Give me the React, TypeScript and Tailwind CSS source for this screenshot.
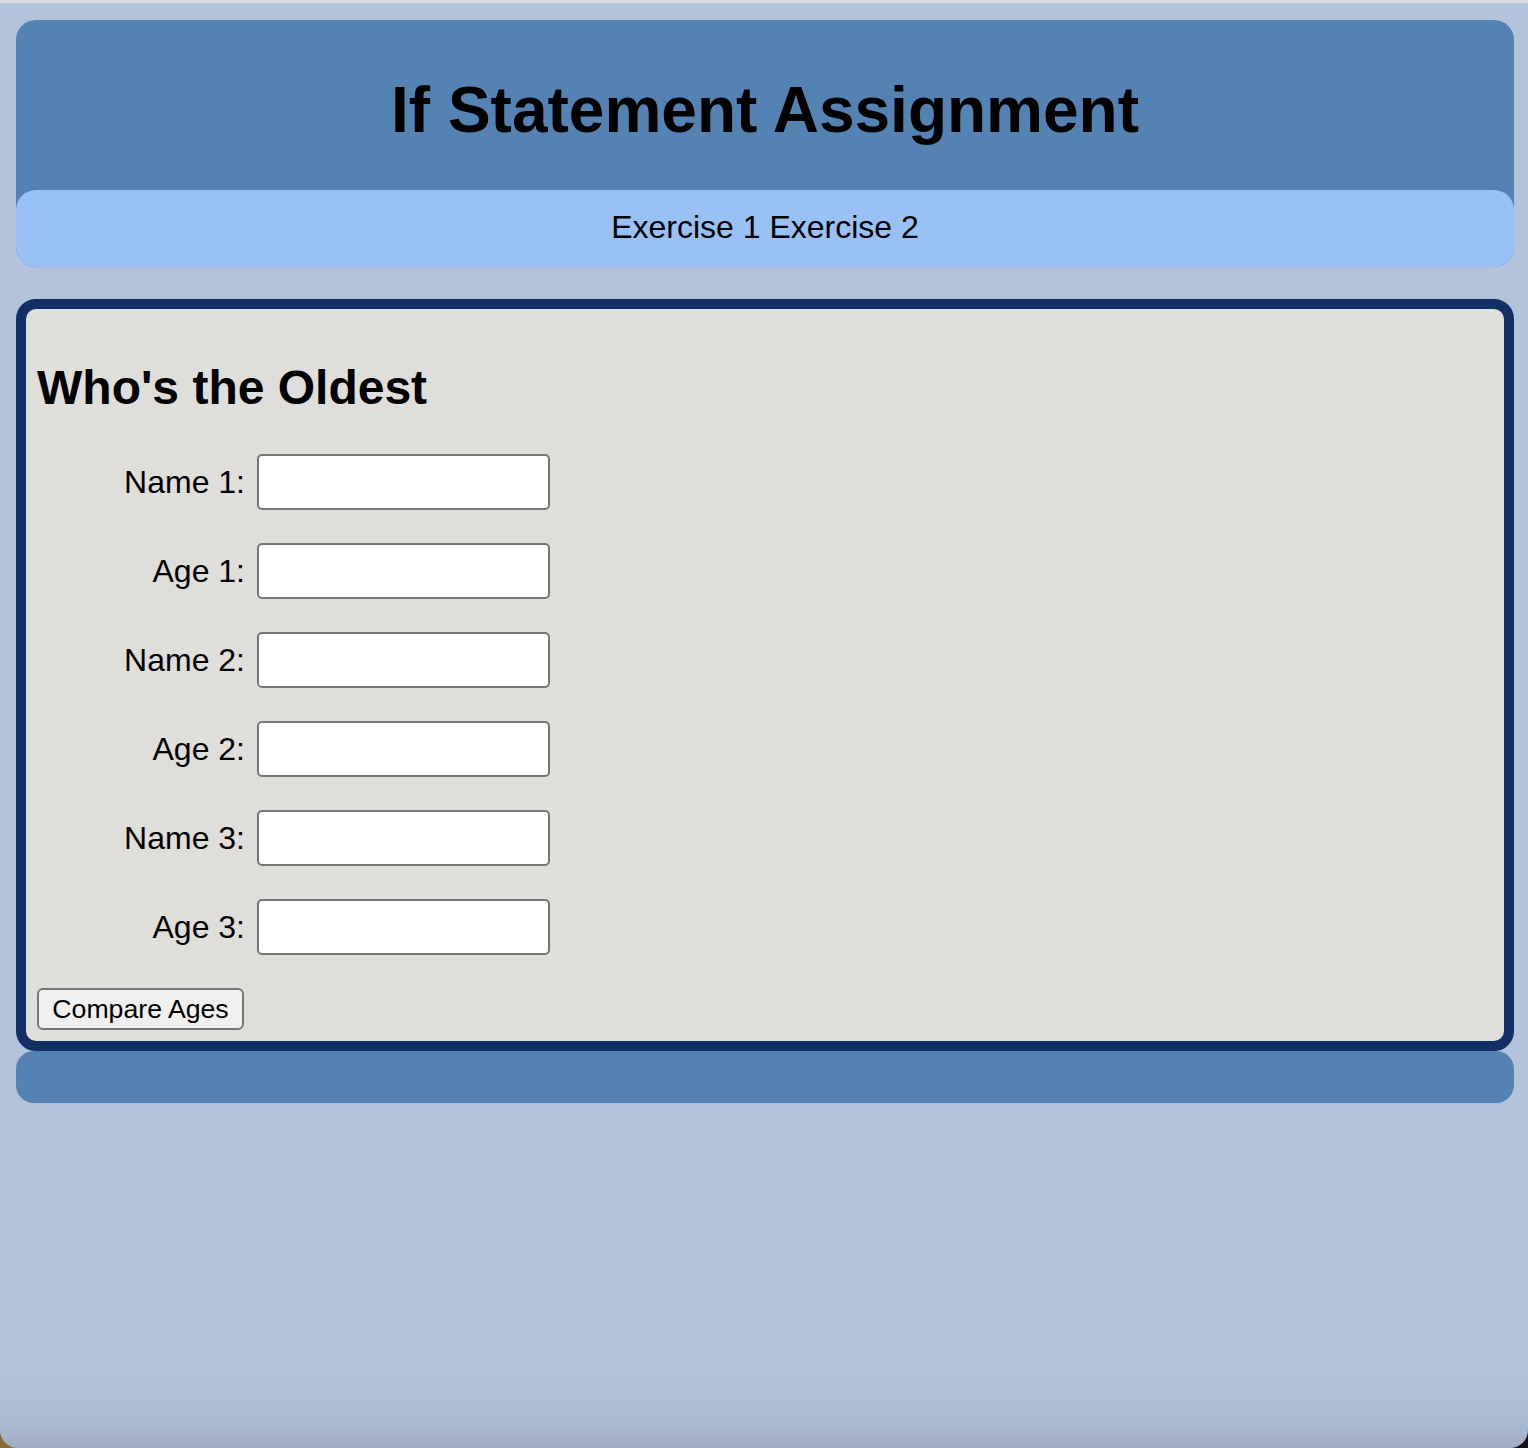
const fields = ["Name 1", "Age 1", "Name 2", "Age 2", "Name 3", "Age 3"];

export default function App() {
  return (
    <div className="min-h-[1448px] bg-gradient-to-r from-[#8a6a3c] to-[#111111] font-['Liberation_Sans',Arial,sans-serif] text-black">
      <div className="min-h-[1448px] rounded-b-[18px] border-t-[3px] border-[#dcdcdc] bg-linear-to-b from-[#b3c3dc] from-94% via-[#adbcd5] via-98% to-[#a0acc4] pt-[17px] pb-4">
        {/* Cabecera */}
        <header className="ml-4 mr-[14px] rounded-[20px] bg-[#5482b2]">
          <div className="h-[170px] pt-[58px]">
            <h1 className="text-center text-[64px] font-bold leading-none">If Statement Assignment</h1>
          </div>
          <nav className="h-[77px] rounded-[20px] bg-[#99c1f5] pt-[21px] text-center text-[32px] leading-none">
            <span>Exercise 1</span> <span>Exercise 2</span>
          </nav>
        </header>

        {/* Formulario */}
        <main className="ml-4 mr-[14px] mt-8 rounded-[20px] border-[10px] border-[#133066] bg-[#dfdedb]">
          <div className="rounded-[10px] px-[11px] pt-[55px] pb-[11px]">
            <h2 className="text-[48px] font-bold leading-none">Who's the Oldest</h2>
            <div className="mt-[42px] flex flex-col gap-[33px]">
              {fields.map((f) => (
                <div key={f} className="flex items-center">
                  <label className="w-[208px] text-right text-[32px] leading-none">{f}:</label>
                  <input
                    type="text"
                    className="ml-3 h-14 w-[293px] rounded-[5px] border-2 border-[#767676] bg-white px-2 text-[26px] outline-none"
                  />
                </div>
              ))}
            </div>
            <button className="mt-[33px] flex h-[42px] w-[207px] items-center justify-center rounded-[6px] border-2 border-[#767676] bg-[#efefef] text-[26.67px] leading-none">
              Compare Ages
            </button>
          </div>
        </main>

        {/* Pie */}
        <footer className="ml-4 mr-[14px] h-[52px] rounded-[18px] bg-[#5482b2]"></footer>
      </div>
    </div>
  );
}
